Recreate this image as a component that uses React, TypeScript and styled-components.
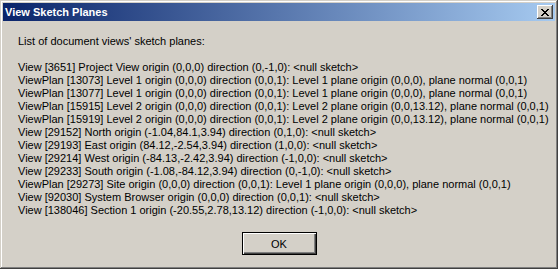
import styled, { createGlobalStyle } from 'styled-components'

const GlobalStyle = createGlobalStyle`
  html, body {
    margin: 0;
    padding: 0;
    background: #d4d0c8;
  }
  body {
    font-family: Tahoma, "Liberation Sans", Arial, sans-serif;
    font-size: 11px;
  }
`

const Window = styled.div`
  width: 558px;
  height: 269px;
  box-sizing: border-box;
  padding: 3px;
  display: flex;
  flex-direction: column;
  background: #d4d0c8;
  box-shadow:
    inset -1px -1px #404040,
    inset 1px 1px #d4d0c8,
    inset -2px -2px #808080,
    inset 2px 2px #ffffff;
`

const TitleBar = styled.div`
  height: 18px;
  display: flex;
  align-items: center;
  justify-content: space-between;
  padding: 0 2px 0 2px;
  background: linear-gradient(to right, #0a246a, #a6caf0);
  color: #ffffff;
`

const Title = styled.span`
  font-weight: bold;
  font-size: 11px;
  line-height: 18px;
  white-space: nowrap;
`

const CloseButton = styled.div`
  width: 16px;
  height: 14px;
  box-sizing: border-box;
  display: flex;
  align-items: center;
  justify-content: center;
  background: #d4d0c8;
  box-shadow:
    inset -1px -1px #404040,
    inset 1px 1px #ffffff,
    inset -2px -2px #808080;
`

const Body = styled.div`
  flex: 1;
  padding: 14px 0 0 15px;
  color: #000000;
`

const Line = styled.div<{ $gapAfter?: boolean }>`
  height: 13px;
  line-height: 13px;
  white-space: nowrap;
  margin-bottom: ${({ $gapAfter }) => ($gapAfter ? '13px' : '0')};
`

const Footer = styled.div`
  display: flex;
  justify-content: center;
  padding-bottom: 11px;
`

const OkButton = styled.button`
  width: 75px;
  height: 23px;
  box-sizing: border-box;
  border: 1px solid #000000;
  background: #d4d0c8;
  font-family: inherit;
  font-size: 11px;
  color: #000000;
  padding: 0;
  box-shadow:
    inset 1px 1px #ffffff,
    inset -1px -1px #404040,
    inset -2px -2px #808080;
`

const lines = [
  'View [3651] Project View origin (0,0,0) direction (0,-1,0): <null sketch>',
  'ViewPlan [13073] Level 1 origin (0,0,0) direction (0,0,1): Level 1 plane origin (0,0,0), plane normal (0,0,1)',
  'ViewPlan [13077] Level 1 origin (0,0,0) direction (0,0,1): Level 1 plane origin (0,0,0), plane normal (0,0,1)',
  'ViewPlan [15915] Level 2 origin (0,0,0) direction (0,0,1): Level 2 plane origin (0,0,13.12), plane normal (0,0,1)',
  'ViewPlan [15919] Level 2 origin (0,0,0) direction (0,0,1): Level 2 plane origin (0,0,13.12), plane normal (0,0,1)',
  'View [29152] North origin (-1.04,84.1,3.94) direction (0,1,0): <null sketch>',
  'View [29193] East origin (84.12,-2.54,3.94) direction (1,0,0): <null sketch>',
  'View [29214] West origin (-84.13,-2.42,3.94) direction (-1,0,0): <null sketch>',
  'View [29233] South origin (-1.08,-84.12,3.94) direction (0,-1,0): <null sketch>',
  'ViewPlan [29273] Site origin (0,0,0) direction (0,0,1): Level 1 plane origin (0,0,0), plane normal (0,0,1)',
  'View [92030] System Browser origin (0,0,0) direction (0,0,1): <null sketch>',
  'View [138046] Section 1 origin (-20.55,2.78,13.12) direction (-1,0,0): <null sketch>',
]

export default function App() {
  return (
    <>
      <GlobalStyle />
      <Window>
        <TitleBar>
          <Title>View Sketch Planes</Title>
          <CloseButton>
            <svg width="8" height="7" viewBox="0 0 8 7">
              <path
                d="M0 0h2v1h1v1h2V1h1V0h2v1H7v1H6v1H5v1h1v1h1v1h1v1H6V6H5V5H3v1H2v1H0V6h1V5h1V4h1V3H2V2H1V1H0z"
                fill="#000"
              />
            </svg>
          </CloseButton>
        </TitleBar>
        <Body>
          <Line $gapAfter>List of document views' sketch planes:</Line>
          {lines.map((text) => (
            <Line key={text}>{text}</Line>
          ))}
        </Body>
        <Footer>
          <OkButton>OK</OkButton>
        </Footer>
      </Window>
    </>
  )
}
